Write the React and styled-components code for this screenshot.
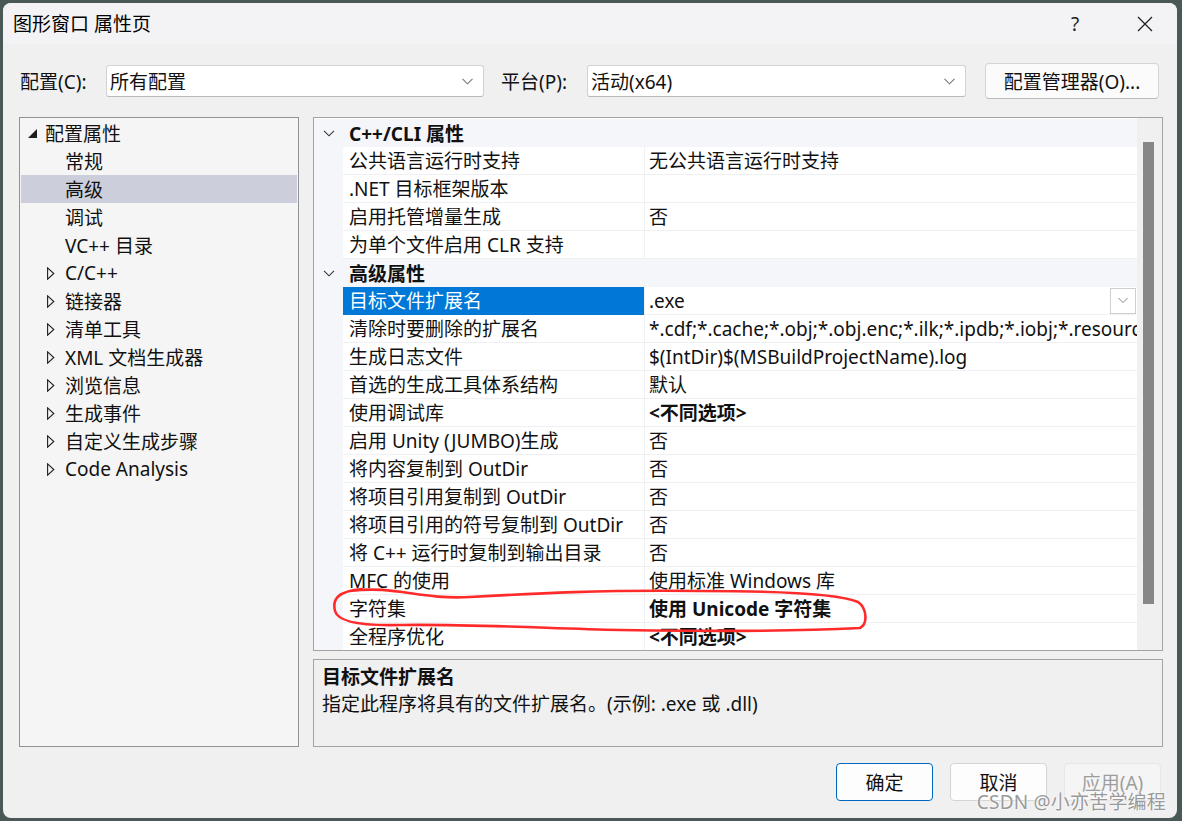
import React from 'react'
import styled, { createGlobalStyle } from 'styled-components'

const GlobalStyle = createGlobalStyle`
 html, body { margin: 0; padding: 0; }
 body {
  background: #4a5858;
  font-family: "Noto Sans", "Noto Sans CJK SC", sans-serif;
  font-size: 19px;
  color: #111;
 }
`

const Page = styled.div`
 width: 1182px;
 height: 821px;
 padding: 3px 5px 3px 3px;
 box-sizing: border-box;
 overflow: hidden;
`
const Window = styled.div`
 position: relative;
 width: 1174px;
 height: 815px;
 background: #f0f0f0;
 border-radius: 8px;
 overflow: hidden;
 display: flex;
 flex-direction: column;
`
const TitleBar = styled.div`
 height: 41px;
 flex: none;
 display: flex;
 align-items: center;
 padding-left: 10px;
 background: #f3f3f6;
`
const Title = styled.span`
 line-height: 26px;
 color: #000;
`
const TitleControls = styled.div`
 margin-left: auto;
 margin-right: 10px;
 display: flex;
 gap: 26px;
`
const TitleBtn = styled.div`
 width: 44px;
 height: 32px;
 display: flex;
 align-items: center;
 justify-content: center;
 color: #222;
 font-size: 19px;
`
const Body = styled.div`
 padding: 0 14px 0 16px;
 display: flex;
 flex-direction: column;
`
const ConfigRow = styled.div`
 margin-top: 19px;
 height: 36px;
 display: flex;
 align-items: center;
`
const Label = styled.span`
 width: ${p => p.w || 86}px;
 margin-left: ${p => p.ml || 0}px;
 flex: none;
`
const Select = styled.div`
 width: ${p => p.w}px;
 margin-right: ${p => p.mr || 0}px;
 height: 32px;
 box-sizing: border-box;
 background: #fff;
 border: 1px solid #d2d2d2;
 border-bottom-color: #b8b8b8;
 border-radius: 3px;
 display: flex;
 align-items: center;
 padding: 0 10px 0 3px;
 flex: none;
`
const SelectText = styled.span`
 flex: 1;
`
const ManagerButton = styled.div`
 margin-left: 19px;
 width: 174px;
 height: 36px;
 box-sizing: border-box;
 background: #fbfbfb;
 border: 1px solid #d4d4d4;
 border-bottom-color: #bdbdbd;
 border-radius: 4px;
 display: flex;
 align-items: center;
 justify-content: center;
`
const Main = styled.div`
 margin-top: 18px;
 display: flex;
 gap: 14px;
`
const Tree = styled.div`
 width: 280px;
 height: 630px;
 box-sizing: border-box;
 border: 1px solid #8e9399;
 background: #f5f5f5;
 padding: 1px 1px 0;
`
const TreeRow = styled.div`
 height: 28px;
 display: flex;
 align-items: center;
 background: ${p => (p.selected ? '#cccedb' : 'transparent')};
 white-space: nowrap;
`
const Arrow = styled.span`
 width: ${p => p.w}px;
 margin-left: ${p => p.ml}px;
 display: flex;
 align-items: center;
 flex: none;
`
const RightCol = styled.div`
 width: 850px;
 display: flex;
 flex-direction: column;
 gap: 8px;
`
const Grid = styled.div`
 height: 534px;
 box-sizing: border-box;
 border: 1px solid #a3a3a3;
 background: #fff;
 display: flex;
`
const List = styled.div`
 flex: 1;
 min-width: 0;
 padding-top: 1px;
 overflow: hidden;
`
const Category = styled.div`
 height: 28px;
 display: grid;
 grid-template-columns: 29px 1fr;
 align-items: center;
 background: #f4f6fa;
 font-weight: 700;
`
const Chevron = styled.span`
 display: flex;
 justify-content: center;
`
const CatLabel = styled.span`
 padding-left: 6px;
`
const Row = styled.div`
 height: 28px;
 display: grid;
 grid-template-columns: 29px 301px 1fr;
`
const Gutter = styled.div`
 background: #f4f6fa;
`
const NameCell = styled.div`
 box-sizing: border-box;
 padding: 1px 0 0 6px;
 line-height: 26px;
 white-space: nowrap;
 overflow: hidden;
 background: ${p => (p.selected ? '#0078d7' : '#fff')};
 color: ${p => (p.selected ? '#fff' : '#111')};
 border-bottom: 1px solid ${p => (p.selected ? '#0078d7' : '#eef0f4')};
`
const ValueCell = styled.div`
 box-sizing: border-box;
 padding: 1px 0 0 4px;
 line-height: 26px;
 white-space: nowrap;
 overflow: hidden;
 border-left: 1px solid #eef0f4;
 border-bottom: 1px solid #eef0f4;
 font-weight: ${p => (p.bold ? 700 : 400)};
 display: flex;
 align-items: center;
`
const ValueText = styled.span`
 flex: 1;
 overflow: hidden;
`
const DropBtn = styled.span`
 width: 26px;
 height: 26px;
 box-sizing: border-box;
 border: 1px solid #cfcfcf;
 background: #fff;
 display: flex;
 align-items: center;
 justify-content: center;
 margin: -1px 1px 0 0;
 flex: none;
`
const ScrollTrack = styled.div`
 width: 25px;
 flex: none;
 background: #f0f0f0;
 padding: 24px 0 0 6px;
 box-sizing: border-box;
`
const ScrollThumb = styled.div`
 width: 11px;
 height: 462px;
 background: #878787;
`
const Desc = styled.div`
 height: 88px;
 box-sizing: border-box;
 border: 1px solid #a3a3a3;
 background: #f0f0f0;
 padding: 3px 8px 0;
`
const DescTitle = styled.div`
 font-weight: 700;
 line-height: 28px;
`
const DescText = styled.div`
 line-height: 27px;
`
const Footer = styled.div`
 margin-top: 16px;
 display: flex;
 justify-content: flex-end;
 gap: 17px;
 padding-right: 2px;
`
const Button = styled.div`
 width: 97px;
 height: 38px;
 box-sizing: border-box;
 border-radius: 4px;
 display: flex;
 align-items: center;
 justify-content: center;
 background: ${p => (p.disabled ? '#f5f5f5' : '#fdfdfd')};
 color: ${p => (p.disabled ? '#9d9d9d' : '#111')};
 border: 1px solid ${p => (p.primary ? '#0067c0' : p.disabled ? '#e6e6e6' : '#d4d4d4')};
`
const Watermark = styled.div`
 position: absolute;
 right: 11px;
 top: 786px;
 color: #999;
 font-size: 19px;
 line-height: 26px;
 letter-spacing: 0.2px;
 text-shadow: 0 0 2px #fff, 0 0 2px #fff;
`
const Overlay = styled.svg`
 position: absolute;
 left: 0;
 top: 0;
 pointer-events: none;
`

const SmallChevron = ({ color = '#777', w = 11 }) => (
  <svg width={w} height="7" viewBox="0 0 11 7">
    <polyline points="0.5,0.8 5.5,5.8 10.5,0.8" fill="none" stroke={color} strokeWidth="1.1" />
  </svg>
)

const tree = [
  { label: '配置属性', level: 0, open: true },
  { label: '常规', level: 1 },
  { label: '高级', level: 1, selected: true },
  { label: '调试', level: 1 },
  { label: 'VC++ 目录', level: 1 },
  { label: 'C/C++', level: 1, closed: true },
  { label: '链接器', level: 1, closed: true },
  { label: '清单工具', level: 1, closed: true },
  { label: 'XML 文档生成器', level: 1, closed: true },
  { label: '浏览信息', level: 1, closed: true },
  { label: '生成事件', level: 1, closed: true },
  { label: '自定义生成步骤', level: 1, closed: true },
  { label: 'Code Analysis', level: 1, closed: true },
]

const props = [
  { cat: 'C++/CLI 属性' },
  { name: '公共语言运行时支持', value: '无公共语言运行时支持' },
  { name: '.NET 目标框架版本', value: '' },
  { name: '启用托管增量生成', value: '否' },
  { name: '为单个文件启用 CLR 支持', value: '' },
  { cat: '高级属性' },
  { name: '目标文件扩展名', value: '.exe', selected: true },
  { name: '清除时要删除的扩展名', value: '*.cdf;*.cache;*.obj;*.obj.enc;*.ilk;*.ipdb;*.iobj;*.resources;*.tlb;*.tli;*.tlh;*.tmp;*.rsp;*.pgc;*.pgd' },
  { name: '生成日志文件', value: '$(IntDir)$(MSBuildProjectName).log' },
  { name: '首选的生成工具体系结构', value: '默认' },
  { name: '使用调试库', value: '<不同选项>', bold: true },
  { name: '启用 Unity (JUMBO)生成', value: '否' },
  { name: '将内容复制到 OutDir', value: '否' },
  { name: '将项目引用复制到 OutDir', value: '否' },
  { name: '将项目引用的符号复制到 OutDir', value: '否' },
  { name: '将 C++ 运行时复制到输出目录', value: '否' },
  { name: 'MFC 的使用', value: '使用标准 Windows 库' },
  { name: '字符集', value: '使用 Unicode 字符集', bold: true },
  { name: '全程序优化', value: '<不同选项>', bold: true },
]

const TreeItem = ({ item }) => (
  <TreeRow selected={item.selected}>
    {item.level === 0 ? (
      <Arrow w={17} ml={7}>
        <svg width="9" height="9" viewBox="0 0 9 9"><polygon points="9,0 9,9 0,9" fill="#1e1e1e" /></svg>
      </Arrow>
    ) : item.closed ? (
      <Arrow w={18} ml={26}>
        <svg width="8" height="13" viewBox="0 0 8 13"><polygon points="0.6,0.8 6.8,6.5 0.6,12.2" fill="none" stroke="#1e1e1e" strokeWidth="1.1" /></svg>
      </Arrow>
    ) : (
      <Arrow w={0} ml={44} />
    )}
    <span>{item.label}</span>
  </TreeRow>
)

export default function App() {
  return (
    <Page>
      <GlobalStyle />
      <Window>
        <TitleBar>
          <Title>图形窗口 属性页</Title>
          <TitleControls>
            <TitleBtn>?</TitleBtn>
            <TitleBtn>
              <svg width="16" height="16" viewBox="0 0 16 16">
                <path d="M1 1 L15 15 M15 1 L1 15" stroke="#222" strokeWidth="1.3" />
              </svg>
            </TitleBtn>
          </TitleControls>
        </TitleBar>
        <Body>
          <ConfigRow>
            <Label ml={1}>配置(C):</Label>
            <Select w={378} mr={17}>
              <SelectText>所有配置</SelectText>
              <SmallChevron />
            </Select>
            <Label>平台(P):</Label>
            <Select w={379}>
              <SelectText>活动(x64)</SelectText>
              <SmallChevron />
            </Select>
            <ManagerButton>配置管理器(O)...</ManagerButton>
          </ConfigRow>
          <Main>
            <Tree>
              {tree.map(t => <TreeItem key={t.label} item={t} />)}
            </Tree>
            <RightCol>
              <Grid>
                <List>
                  {props.map((p, i) =>
                    p.cat ? (
                      <Category key={i}>
                        <Chevron><SmallChevron color="#333" w={12} /></Chevron>
                        <CatLabel>{p.cat}</CatLabel>
                      </Category>
                    ) : (
                      <Row key={i}>
                        <Gutter />
                        <NameCell selected={p.selected}>{p.name}</NameCell>
                        <ValueCell bold={p.bold}>
                          <ValueText>{p.value}</ValueText>
                          {p.selected && <DropBtn><SmallChevron color="#888" w={10} /></DropBtn>}
                        </ValueCell>
                      </Row>
                    )
                  )}
                </List>
                <ScrollTrack><ScrollThumb /></ScrollTrack>
              </Grid>
              <Desc>
                <DescTitle>目标文件扩展名</DescTitle>
                <DescText>指定此程序将具有的文件扩展名。(示例: .exe 或 .dll)</DescText>
              </Desc>
            </RightCol>
          </Main>
          <Footer>
            <Button primary>确定</Button>
            <Button>取消</Button>
            <Button disabled>应用(A)</Button>
          </Footer>
        </Body>
        <Overlay width="1174" height="815" viewBox="3 3 1174 815">
          <path
            d="M350 591 C395 585, 420 600, 470 597 C540 593, 600 590, 700 591 C780 591, 840 594, 858 602 C867 608, 868 624, 860 628 C780 632, 700 631, 620 630 C540 628, 470 624, 400 625 C362 626, 338 622, 335 611 C332 599, 338 591, 362 589"
            fill="none"
            stroke="#ff2b2b"
            strokeWidth="2.6"
            strokeLinecap="round"
          />
        </Overlay>
        <Watermark>CSDN @小亦苦学编程</Watermark>
      </Window>
    </Page>
  )
}
